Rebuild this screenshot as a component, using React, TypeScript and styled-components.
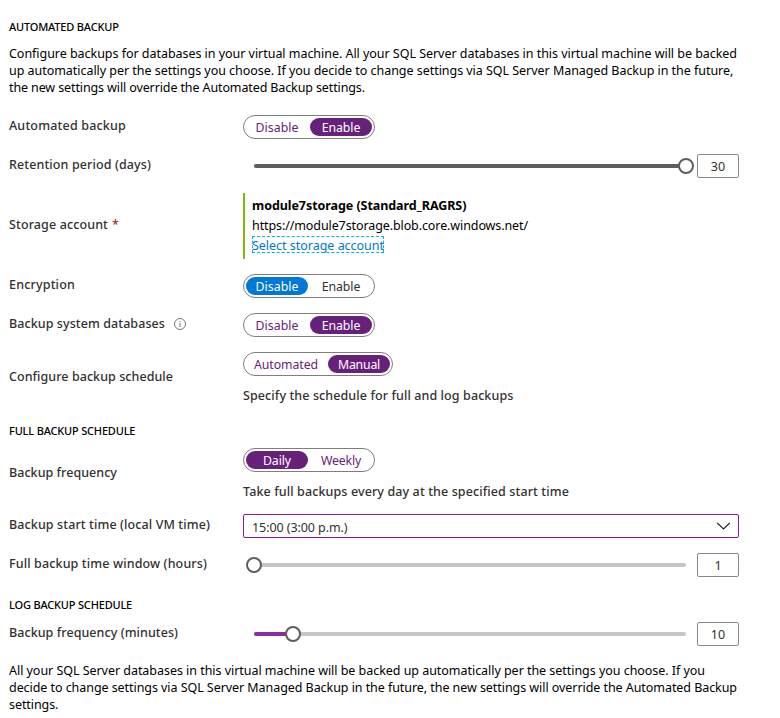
import React from "react";
import styled, { createGlobalStyle } from "styled-components";

const purple = "#68217a";
const blue = "#0078d7";

const GlobalStyle = createGlobalStyle`
  *, *::before, *::after { box-sizing: border-box; }
  body {
    margin: 0;
    background: #fff;
    color: #323130;
    font-family: "Noto Sans", "Open Sans", sans-serif;
    font-size: 12.5px;
  }
`;

const Page = styled.main`
  display: flex;
  flex-direction: column;
  width: 780px;
  height: 718px;
  padding: 19px 41px 0 9px;
  overflow: hidden;
`;

const Heading = styled.h2`
  margin: 0;
  padding-bottom: 1px;
  font-size: 11px;
  font-weight: 500;
  line-height: 15px;
  letter-spacing: -0.18px;
  color: #000;
`;

const Section = styled.section`
  display: flex;
  flex-direction: column;
  gap: 15px;
  padding: 9px 0 20px;

  &:first-of-type { padding-top: 19px; }
  &:last-of-type { padding-bottom: 16px; }
`;

const Paragraph = styled.p<{ $gap?: number }>`
  margin: ${(p) => p.$gap ?? 0}px 0 0;
  line-height: 17px;
  color: #000;
`;

const Line = styled.span<{ $track: number }>`
  display: block;
  white-space: nowrap;
  letter-spacing: ${(p) => p.$track}px;
`;

const Row = styled.div<{ $height?: number }>`
  display: grid;
  grid-template-columns: 234px 496px;
  align-items: center;
  height: ${(p) => p.$height ?? 24}px;
`;

const Label = styled.div<{ $track: number; $lift?: number }>`
  display: flex;
  align-items: center;
  height: 20px;
  margin-bottom: ${(p) => p.$lift ?? 2}px;
  font-weight: 500;
  line-height: 20px;
  white-space: nowrap;
  letter-spacing: ${(p) => p.$track}px;
`;

const Required = styled.span`
  margin-left: 4px;
  color: #a4262c;
`;

const InfoSvg = styled.svg`
  width: 12px;
  height: 12px;
  margin-left: 9px;
`;

const Stack = styled.div`
  display: flex;
  flex-direction: column;
  align-self: start;
  gap: 10px;
`;

const Hint = styled.div<{ $track: number }>`
  font-weight: 500;
  line-height: 20px;
  white-space: nowrap;
  letter-spacing: ${(p) => p.$track}px;
`;

const ToggleFrame = styled.div`
  display: flex;
  gap: 2px;
  width: max-content;
  height: 24px;
  padding: 2px;
  border: 1px solid #807e7d;
  border-radius: 12px;
`;

const Option = styled.button<{ $on: boolean; $accent: string; $idle: string; $width: number; $track: number }>`
  width: ${(p) => p.$width}px;
  height: 18px;
  padding: 2px 0 0;
  border: 0;
  border-radius: 9px;
  background: ${(p) => (p.$on ? p.$accent : "transparent")};
  color: ${(p) => (p.$on ? "#fff" : p.$idle)};
  font: 400 12.3px/16px "Noto Sans", sans-serif;
  letter-spacing: ${(p) => p.$track}px;
  text-align: center;
`;

const SliderRow = styled.div`
  display: grid;
  grid-template-columns: 432px 42px;
  column-gap: 11px;
  align-items: center;
  padding-left: 11px;
`;

const Track = styled.div`
  position: relative;
  height: 4px;
  border-radius: 2px;
  background: #c8c6c4;
`;

const Fill = styled.div<{ $color: string }>`
  height: 4px;
  border-radius: 2px;
  background: ${(p) => p.$color};
`;

const Thumb = styled.div`
  position: absolute;
  top: -6px;
  width: 16px;
  height: 16px;
  margin-left: -8px;
  border: 2px solid #605e5c;
  border-radius: 50%;
  background: #fff;
`;

const NumberBox = styled.div`
  height: 24px;
  border: 1px solid #8a8886;
  border-radius: 2px;
  line-height: 24px;
  text-align: center;
`;

const Storage = styled.div`
  height: 66px;
  padding: 3px 0 3px 7px;
  border-left: 2px solid #7fba00;
  color: #000;
  line-height: 20px;
  white-space: nowrap;
`;

const StorageName = styled.div`
  font-weight: 700;
  letter-spacing: -0.06px;
`;

const StorageUrl = styled.div`
  letter-spacing: -0.1px;
`;

const StorageLink = styled.a`
  display: block;
  width: 132px;
  height: 17px;
  outline: 1px dashed #00b0f0;
  outline-offset: -1px;
  color: ${blue};
  line-height: 20px;
  letter-spacing: -0.02px;
`;

const Select = styled.div`
  display: flex;
  align-items: center;
  justify-content: space-between;
  height: 24px;
  padding: 0 8px;
  border: 1px solid #881798;
  border-radius: 2px;
  letter-spacing: -0.08px;
  line-height: 20px;
`;

const SelectValue = styled.span`
  padding-top: 3px;
`;

const Chevron = () => (
  <svg width="14" height="8" viewBox="0 0 14 8" fill="none" stroke="#201f1e" strokeWidth="1.2">
    <path d="M1.2.9 7.5 7 13.8.9" />
  </svg>
);

const InfoIcon = () => (
  <InfoSvg viewBox="0 0 12 12" fill="none" stroke="#797775">
    <circle cx="6" cy="6" r="5.5" />
    <path d="M6 5v4M6 3v1" />
  </InfoSvg>
);

type Choice = { text: string; track: number; width?: number };

const disableEnable: Choice[] = [
  { text: "Disable", track: 0.05 },
  { text: "Enable", track: -0.05 },
];

function Toggle({ choices, selected, accent = purple, idle = purple }: {
  choices: Choice[];
  selected: number;
  accent?: string;
  idle?: string;
}) {
  return (
    <ToggleFrame>
      {choices.map((c, i) => (
        <Option
          key={c.text}
          $on={i === selected}
          $accent={accent}
          $idle={idle}
          $width={c.width ?? 62}
          $track={c.track}
        >
          {c.text}
        </Option>
      ))}
    </ToggleFrame>
  );
}

function Slider({ value, min, max, color }: { value: number; min: number; max: number; color: string }) {
  const position = `${((value - min) / (max - min)) * 100}%`;
  return (
    <SliderRow>
      <Track>
        <Fill $color={color} style={{ width: position }} />
        <Thumb style={{ left: position }} />
      </Track>
      <NumberBox>{value}</NumberBox>
    </SliderRow>
  );
}

export default function App() {
  return (
    <>
      <GlobalStyle />
      <Page>
        <Heading>AUTOMATED BACKUP</Heading>
        <Paragraph $gap={10}>
          <Line $track={-0.038}>Configure backups for databases in your virtual machine. All your SQL Server databases in this virtual machine will be backed</Line>
          <Line $track={-0.039}>up automatically per the settings you choose. If you decide to change settings via SQL Server Managed Backup in the future,</Line>
          <Line $track={-0.117}>the new settings will override the Automated Backup settings.</Line>
        </Paragraph>
        <Section>
          <Row>
            <Label $track={0.187}>Automated backup</Label>
            <Toggle choices={disableEnable} selected={1} />
          </Row>
          <Row>
            <Label $track={0.115}>Retention period (days)</Label>
            <Slider value={30} min={1} max={30} color="#605e5c" />
          </Row>
          <Row $height={66}>
            <Label $track={0.121}>Storage account<Required>*</Required></Label>
            <Storage>
              <StorageName>module7storage (Standard_RAGRS)</StorageName>
              <StorageUrl>https://module7storage.blob.core.windows.net/</StorageUrl>
              <StorageLink>Select storage account</StorageLink>
            </Storage>
          </Row>
          <Row>
            <Label $track={0.18}>Encryption</Label>
            <Toggle choices={disableEnable} selected={0} accent={blue} idle="#323130" />
          </Row>
          <Row>
            <Label $track={0.08}>Backup system databases<InfoIcon /></Label>
            <Toggle choices={disableEnable} selected={1} />
          </Row>
          <Row $height={51}>
            <Label $track={0.059} $lift={5}>Configure backup schedule</Label>
            <Stack>
              <Toggle
                choices={[
                  { text: "Automated", track: -0.08, width: 80 },
                  { text: "Manual", track: -0.2 },
                ]}
                selected={1}
              />
              <Hint $track={0.1}>Specify the schedule for full and log backups</Hint>
            </Stack>
          </Row>
        </Section>

        <Heading>FULL BACKUP SCHEDULE</Heading>
        <Section>
          <Row $height={51}>
            <Label $track={0.044} $lift={5}>Backup frequency</Label>
            <Stack>
              <Toggle
                choices={[
                  { text: "Daily", track: -0.08 },
                  { text: "Weekly", track: -0.17 },
                ]}
                selected={0}
              />
              <Hint $track={0.115}>Take full backups every day at the specified start time</Hint>
            </Stack>
          </Row>
          <Row>
            <Label $track={0.11}>Backup start time (local VM time)</Label>
            <Select>
              <SelectValue>15:00 (3:00 p.m.)</SelectValue>
              <Chevron />
            </Select>
          </Row>
          <Row>
            <Label $track={0.13}>Full backup time window (hours)</Label>
            <Slider value={1} min={1} max={6} color="#8a2da5" />
          </Row>
        </Section>

        <Heading>LOG BACKUP SCHEDULE</Heading>
        <Section>
          <Row>
            <Label $track={0.067}>Backup frequency (minutes)</Label>
            <Slider value={10} min={5} max={60} color="#8a2da5" />
          </Row>
        </Section>
        <Paragraph>
          <Line $track={-0.04}>All your SQL Server databases in this virtual machine will be backed up automatically per the settings you choose. If you</Line>
          <Line $track={-0.061}>decide to change settings via SQL Server Managed Backup in the future, the new settings will override the Automated Backup</Line>
          <Line $track={-0.08}>settings.</Line>
        </Paragraph>
      </Page>
    </>
  );
}
